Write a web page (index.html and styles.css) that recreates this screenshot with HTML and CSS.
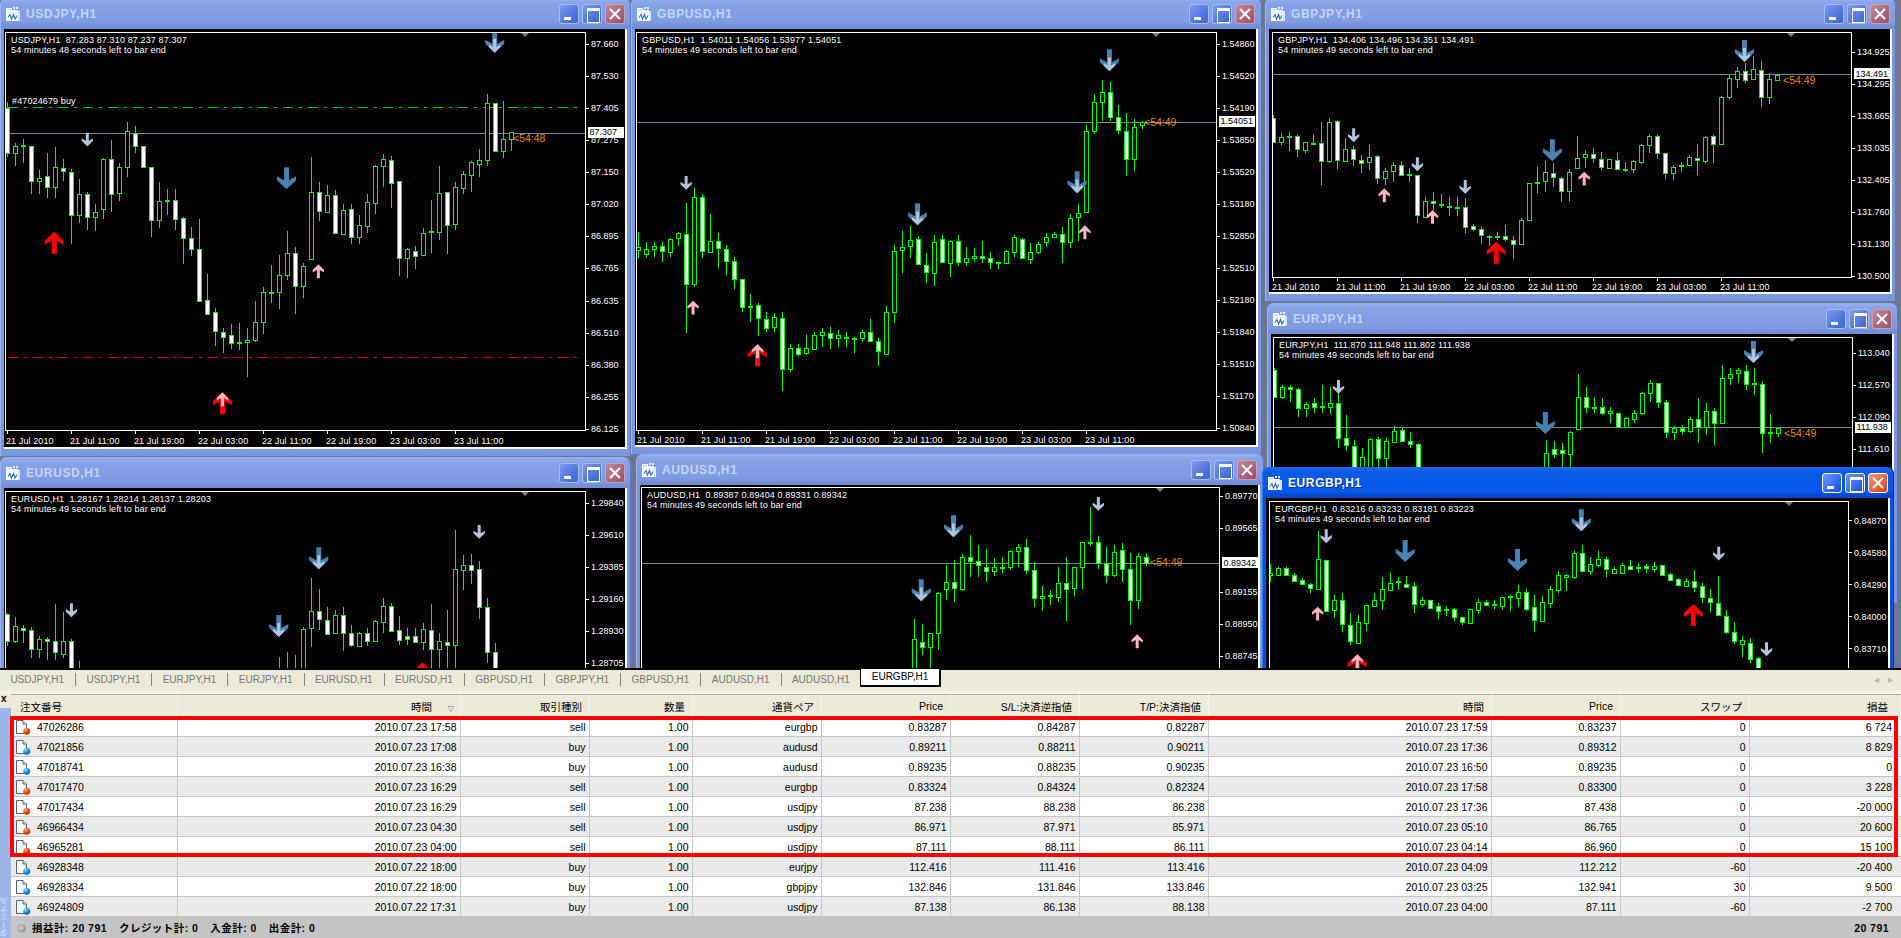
FILE: index.html
```html
<!DOCTYPE html>
<html lang="ja">
<head>
<meta charset="utf-8">
<title>MetaTrader</title>
<link rel="stylesheet" href="styles.css">
</head>
<body>
<svg class="sprite" aria-hidden="true">
  <defs>
    <radialGradient id="ballRed" cx="35%" cy="30%" r="75%"><stop offset="0" stop-color="#ffb08a"/><stop offset=".5" stop-color="#f04a10"/><stop offset="1" stop-color="#b82800"/></radialGradient>
    <radialGradient id="ballBlue" cx="35%" cy="30%" r="75%"><stop offset="0" stop-color="#a8e0ff"/><stop offset=".5" stop-color="#1c8ee8"/><stop offset="1" stop-color="#0a58b0"/></radialGradient>
    <symbol id="docSell" viewBox="0 0 16 16"><path d="M1.5 1.5H8L11.5 5V14.5H1.5Z" fill="#fff" stroke="#56616e"/><path d="M8 1.5V5H11.5" fill="#e4e8ee" stroke="#56616e"/><circle cx="11.7" cy="12.3" r="3.4" fill="url(#ballRed)"/></symbol>
    <symbol id="docBuy" viewBox="0 0 16 16"><path d="M1.5 1.5H8L11.5 5V14.5H1.5Z" fill="#fff" stroke="#56616e"/><path d="M8 1.5V5H11.5" fill="#e4e8ee" stroke="#56616e"/><circle cx="11.7" cy="12.3" r="3.4" fill="url(#ballBlue)"/></symbol>
    <symbol id="winIcon" viewBox="0 0 14 14"><path d="M0 1H6V3H12V14H0Z" fill="#fff"/><path d="M1 2H5V4H1Z" fill="#d6e4fb"/><path d="M7 0H9V2H7ZM10 0H12V2H10Z" fill="#e8f0ff"/><path d="M0 5H14V6H0Z" fill="#e8f0ff"/><path d="M2 10.5L4 7.5 5.5 12 7.5 7.5 9 12 11 8.5" fill="none" stroke="#2f74c8" stroke-width="1.2"/><path d="M12 4H14V14H12Z" fill="#dbe7fd"/></symbol>
  </defs>
</svg>

<main class="app">
  <section class="mdi">
    <article class="win win-usdjpy">
      <header class="bar"><svg class="wicon"><use href="#winIcon"/></svg><span class="wtitle">USDJPY,H1</span><span class="btns"><i class="btn min"></i><i class="btn max"></i><i class="btn cls"></i></span></header>
      <div class="client"><svg class="chart" data-chart="usdjpy"></svg></div>
    </article>
    <article class="win win-gbpusd">
      <header class="bar"><svg class="wicon"><use href="#winIcon"/></svg><span class="wtitle">GBPUSD,H1</span><span class="btns"><i class="btn min"></i><i class="btn max"></i><i class="btn cls"></i></span></header>
      <div class="client"><svg class="chart" data-chart="gbpusd"></svg></div>
    </article>
    <article class="win win-gbpjpy">
      <header class="bar"><svg class="wicon"><use href="#winIcon"/></svg><span class="wtitle">GBPJPY,H1</span><span class="btns"><i class="btn min"></i><i class="btn max"></i><i class="btn cls"></i></span></header>
      <div class="client"><svg class="chart" data-chart="gbpjpy"></svg></div>
    </article>
    <article class="win win-eurjpy">
      <header class="bar"><svg class="wicon"><use href="#winIcon"/></svg><span class="wtitle">EURJPY,H1</span><span class="btns"><i class="btn min"></i><i class="btn max"></i><i class="btn cls"></i></span></header>
      <div class="client"><svg class="chart" data-chart="eurjpy"></svg></div>
    </article>
    <article class="win win-eurusd">
      <header class="bar"><svg class="wicon"><use href="#winIcon"/></svg><span class="wtitle">EURUSD,H1</span><span class="btns"><i class="btn min"></i><i class="btn max"></i><i class="btn cls"></i></span></header>
      <div class="client"><svg class="chart" data-chart="eurusd"></svg></div>
    </article>
    <article class="win win-audusd">
      <header class="bar"><svg class="wicon"><use href="#winIcon"/></svg><span class="wtitle">AUDUSD,H1</span><span class="btns"><i class="btn min"></i><i class="btn max"></i><i class="btn cls"></i></span></header>
      <div class="client"><svg class="chart" data-chart="audusd"></svg></div>
    </article>
    <article class="win win-eurgbp active">
      <header class="bar"><svg class="wicon"><use href="#winIcon"/></svg><span class="wtitle">EURGBP,H1</span><span class="btns"><i class="btn min"></i><i class="btn max"></i><i class="btn cls"></i></span></header>
      <div class="client"><svg class="chart" data-chart="eurgbp"></svg></div>
    </article>
  </section>

  <nav class="tabs">
    <span class="tab">USDJPY,H1</span><span class="tab">USDJPY,H1</span><span class="tab">EURJPY,H1</span><span class="tab">EURJPY,H1</span><span class="tab">EURUSD,H1</span><span class="tab">EURUSD,H1</span><span class="tab">GBPUSD,H1</span><span class="tab">GBPJPY,H1</span><span class="tab">GBPUSD,H1</span><span class="tab">AUDUSD,H1</span><span class="tab last">AUDUSD,H1</span><span class="tab current">EURGBP,H1</span>
    <span class="scroll"><span>◂</span><span>▸</span></span>
  </nav>

  <section class="term">
    <aside class="side"><b class="closex">x</b><div class="strip"><span class="striptext">ターミナル</span></div></aside>
    <div class="list">
      <table class="orders">
        <colgroup><col class="c1"><col class="c2"><col class="c3"><col class="c4"><col class="c3"><col class="c3"><col class="c3"><col class="c3"><col class="c2"><col class="c3"><col class="c3"><col></colgroup>
        <thead>
          <tr><th class="left">注文番号</th><th>時間<span class="sort">▽</span></th><th>取引種別</th><th>数量</th><th>通貨ペア</th><th>Price</th><th>S/L:決済逆指値</th><th>T/P:決済指値</th><th>時間</th><th>Price</th><th>スワップ</th><th>損益</th></tr>
        </thead>
        <tbody>
          <tr><td class="left"><span class="id"><svg class="doc"><use href="#docSell"/></svg>47026286</span></td><td>2010.07.23 17:58</td><td>sell</td><td>1.00</td><td>eurgbp</td><td>0.83287</td><td>0.84287</td><td>0.82287</td><td>2010.07.23 17:59</td><td>0.83237</td><td>0</td><td>6 724</td></tr>
          <tr><td class="left"><span class="id"><svg class="doc"><use href="#docBuy"/></svg>47021856</span></td><td>2010.07.23 17:08</td><td>buy</td><td>1.00</td><td>audusd</td><td>0.89211</td><td>0.88211</td><td>0.90211</td><td>2010.07.23 17:36</td><td>0.89312</td><td>0</td><td>8 829</td></tr>
          <tr><td class="left"><span class="id"><svg class="doc"><use href="#docBuy"/></svg>47018741</span></td><td>2010.07.23 16:38</td><td>buy</td><td>1.00</td><td>audusd</td><td>0.89235</td><td>0.88235</td><td>0.90235</td><td>2010.07.23 16:50</td><td>0.89235</td><td>0</td><td>0</td></tr>
          <tr><td class="left"><span class="id"><svg class="doc"><use href="#docSell"/></svg>47017470</span></td><td>2010.07.23 16:29</td><td>sell</td><td>1.00</td><td>eurgbp</td><td>0.83324</td><td>0.84324</td><td>0.82324</td><td>2010.07.23 17:58</td><td>0.83300</td><td>0</td><td>3 228</td></tr>
          <tr><td class="left"><span class="id"><svg class="doc"><use href="#docSell"/></svg>47017434</span></td><td>2010.07.23 16:29</td><td>sell</td><td>1.00</td><td>usdjpy</td><td>87.238</td><td>88.238</td><td>86.238</td><td>2010.07.23 17:36</td><td>87.438</td><td>0</td><td>-20 000</td></tr>
          <tr><td class="left"><span class="id"><svg class="doc"><use href="#docSell"/></svg>46966434</span></td><td>2010.07.23 04:30</td><td>sell</td><td>1.00</td><td>usdjpy</td><td>86.971</td><td>87.971</td><td>85.971</td><td>2010.07.23 05:10</td><td>86.765</td><td>0</td><td>20 600</td></tr>
          <tr><td class="left"><span class="id"><svg class="doc"><use href="#docSell"/></svg>46965281</span></td><td>2010.07.23 04:00</td><td>sell</td><td>1.00</td><td>usdjpy</td><td>87.111</td><td>88.111</td><td>86.111</td><td>2010.07.23 04:14</td><td>86.960</td><td>0</td><td>15 100</td></tr>
          <tr><td class="left"><span class="id"><svg class="doc"><use href="#docBuy"/></svg>46928348</span></td><td>2010.07.22 18:00</td><td>buy</td><td>1.00</td><td>eurjpy</td><td>112.416</td><td>111.416</td><td>113.416</td><td>2010.07.23 04:09</td><td>112.212</td><td>-60</td><td>-20 400</td></tr>
          <tr><td class="left"><span class="id"><svg class="doc"><use href="#docBuy"/></svg>46928334</span></td><td>2010.07.22 18:00</td><td>buy</td><td>1.00</td><td>gbpjpy</td><td>132.846</td><td>131.846</td><td>133.846</td><td>2010.07.23 03:25</td><td>132.941</td><td>30</td><td>9 500</td></tr>
          <tr><td class="left"><span class="id"><svg class="doc"><use href="#docBuy"/></svg>46924809</span></td><td>2010.07.22 17:31</td><td>buy</td><td>1.00</td><td>usdjpy</td><td>87.138</td><td>86.138</td><td>88.138</td><td>2010.07.23 04:00</td><td>87.111</td><td>-60</td><td>-2 700</td></tr>
        </tbody>
      </table>
      <div class="redbox"></div>
      <footer class="totals"><i class="dot"></i><span>損益計: 20 791</span><span>クレジット計: 0</span><span>入金計: 0</span><span>出金計: 0</span><b class="total">20 791</b></footer>
    </div>
  </section>
</main>
<script src="chart.js"></script>
</body>
</html>
```
FILE: styles.css
```css
* { box-sizing: border-box; }
html, body { margin: 0; height: 100%; overflow: hidden; }
body { background: #808890; font-family: "Liberation Sans", "Noto Sans CJK JP", sans-serif; font-size: 10.5px; color: #000; }
.sprite { position: absolute; width: 0; height: 0; }
.app { display: flex; flex-direction: column; height: 938px; }

/* MDI desktop: the windows sit on a free canvas */
.mdi { position: relative; height: 668px; overflow: hidden; flex: none; background: #6d7690; }
.win { position: absolute; display: flex; flex-direction: column; padding: 0 4px 7px; border-radius: 7px 7px 0 0;
  background: linear-gradient(#9ab2ee 0, #86a2e8 5px, #7e9ae3 24px, #6f8bd2 30px, #7b97df 31px, #7b97df 100%); box-shadow: inset 1px 0 #9db4ee, inset -1px 0 #5f78bd; }
.win-usdjpy { left: 0; top: -2px; width: 631px; height: 458px; }
.win-gbpusd { left: 631px; top: -2px; width: 631px; height: 456px; }
.win-gbpjpy { left: 1265px; top: -2px; width: 631px; height: 303px; }
.win-eurjpy { left: 1267px; top: 303px; width: 631px; height: 300px; }
.win-eurusd { left: 0; top: 457px; width: 631px; height: 300px; }
.win-audusd { left: 636px; top: 454px; width: 628px; height: 300px; }
.win-eurgbp { left: 1262px; top: 467px; width: 632px; height: 300px; }
.win-eurgbp.active { background: linear-gradient(#1c6cf0 0, #0a5ae6 5px, #0658ea 24px, #0344c4 30px, #0a50e0 31px, #0a50e0 100%); box-shadow: inset 1px 0 #2d78f0, inset -1px 0 #0331b0; }

.bar { display: flex; align-items: flex-start; height: 31px; flex: none; padding: 6px 2px 0; }
.win-gbpusd .bar, .win-audusd .bar { padding-right: 3px; }
.wicon { width: 14px; height: 14px; flex: none; margin-top: 3px; }
.wtitle { margin: 3px 0 0 6px; font-weight: bold; font-size: 12px; line-height: 14px; letter-spacing: .6px; color: #c8d5f5; }
.active .wtitle { color: #fff; text-shadow: 1px 1px 0 #02309a; }
.btns { display: flex; gap: 3px; margin-left: auto; }
.btn { position: relative; display: block; width: 20px; height: 20px; border-radius: 3px; border: 1px solid #a9bdf0; background: linear-gradient(135deg, #7b9af0, #4a72dc 70%, #3f66d0); }
.btn.cls { border-color: #c9a0b4; background: linear-gradient(135deg, #c08a9c, #a85f72 70%, #9a5068); }
.active .btn { border-color: #fff; background: linear-gradient(135deg, #6e9bff, #2f63e4 70%, #1e50d0); }
.active .btn.cls { background: linear-gradient(135deg, #f09a78, #de5a2c 70%, #c8421c); }
.btn.min::after { content: ""; position: absolute; left: 4px; bottom: 3px; width: 7px; height: 3px; background: #fff; }
.btn.max::after { content: ""; position: absolute; left: 4px; top: 3px; width: 11px; height: 11px; border: 1px solid #fff; border-top-width: 3px; }
.btn.cls::before, .btn.cls::after { content: ""; position: absolute; left: 2px; top: 8px; width: 14px; height: 2px; background: #fff; transform: rotate(45deg); }
.btn.cls::after { transform: rotate(-45deg); }

.client { flex: 1; min-height: 0; background: #000; border-right: 2px solid #fff; border-bottom: 2px solid #fff; }
.chart { display: block; width: 100%; height: 100%; }
.chart text { font-family: "Liberation Sans", sans-serif; font-size: 9px; fill: #fff; white-space: pre; }
.chart text.legend { letter-spacing: .13px; }
.chart text.tl { letter-spacing: .1px; }
.chart text.timer { font-size: 10.5px; fill: #e88a14; }
.chart text.now { fill: #000; }
.chart .crisp { shape-rendering: crispEdges; }

/* tab strip */
.tabs { display: flex; align-items: flex-start; flex: none; height: 26px; border-top: 2px solid #000; color: #777; font-size: 10px;
  background: repeating-conic-gradient(#e9e6d5 0 25%, #f0eddd 0 50%) 0 0/2px 2px; box-shadow: inset 0 -3px #f4f2e6, inset 0 -2px #fff; }
.tab { height: 13px; line-height: 13px; margin-top: 3px; padding: 0 11px 0 10.4px; border-right: 1px solid #8a8880; white-space: nowrap; }
.tab.last { border-right: 0; }
.tab.current { height: 18px; line-height: 16px; margin: -1px 0 0 -1px; padding: 0 11px; color: #000; background: #fff; border: 1px solid #000; border-width: 0 2px 2px 1px; }
.scroll { display: flex; gap: 9px; margin: 3px 8px 0 auto; color: #b8b6aa; font-size: 10px; line-height: 13px; }

/* terminal */
.term { display: flex; flex: 1; min-height: 0; }
.side { width: 11px; flex: none; display: flex; flex-direction: column; background: #ece9d8; }
.closex { height: 14px; font-size: 10px; line-height: 10px; padding-left: 1px; }
.strip { flex: 1; overflow: hidden; display: flex; align-items: flex-end; background: #9db6e8; }
.striptext { writing-mode: vertical-rl; transform: rotate(180deg); color: #dfe8fb; font-size: 8px; line-height: 10px; margin-bottom: 1px; }
.list { position: relative; flex: 1; min-width: 0; background: #fff; }
.orders { border-collapse: separate; border-spacing: 0; table-layout: fixed; width: 100%; }
.c1 { width: 167px; } .c2 { width: 283px; } .c3 { width: 129px; } .c4 { width: 103px; }
.orders th { height: 23px; padding: 0 7px 0 4px; text-align: right; font-weight: normal; font-size: 10.5px; border-top: 1px solid #aca899; border-right: 1px solid #f6f5ee;
  background: repeating-conic-gradient(#e9e6d5 0 25%, #f0eddd 0 50%) 0 0/2px 2px; white-space: nowrap; }
.orders th.left { text-align: left; padding-left: 9px; }
.orders th:last-child { padding-right: 12px; }
.sort { display: inline-block; width: 9px; margin: 0 -1px 0 13px; color: #777; font-size: 8px; font-family: "DejaVu Sans", sans-serif; }
.orders td { height: 20px; padding: 0 3.5px 0 4px; text-align: right; border-right: 1px solid #c8c8c8; border-bottom: 1px solid #c4c4c4; white-space: nowrap; background: #fff; }
.orders td:last-child { padding-right: 9px; border-right: 0; }
.orders tbody tr:nth-child(even) td { background: repeating-conic-gradient(#e6e7e7 0 25%, #ecedec 0 50%) 0 0/2px 2px; }
.orders td.left { text-align: left; }
.id { display: flex; align-items: center; }
.doc { width: 16px; height: 16px; flex: none; margin-right: 6px; }
.redbox { position: absolute; left: -1px; top: 22px; width: 1888px; height: 141px; border: 4px solid #f00; pointer-events: none; }
.totals { display: flex; align-items: center; height: 21px; background: #c4c4c4; font-weight: bold; font-size: 10.5px; letter-spacing: .45px; }
.totals span { margin-right: 12px; }
.dot { width: 9px; height: 9px; margin: 2px 6px 0 6px; border-radius: 50%; background: radial-gradient(circle at 40% 40%, #c4c4c4 0 30%, #8e8e8e 70%); border: 1px solid #a8a8a8; }
.total { margin-left: auto; margin-right: 12px; }
```
FILE: chart.js
```js
// Candle data per chart, read in "zoom units": x = x0 + 8*i, page y = yoff + v/3.
// Each candle: [high, bodyTop, bodyBottom, low, white(1)/hollow(0)]
var CHARTS = {
  usdjpy: { x0:7, yoff:0, xoff:0, fx:2.45, plot:[5,32,586,431], head:"USDJPY,H1  87.283 87.310 87.237 87.307", sub:"54 minutes 48 seconds left to bar end", bid:398, now:"87.307", nowY:395, timer:"<54:48", timerX:513, timerY:416, tri:525, axisTime:441,
    prices:[[131,"87.660"],[227,"87.530"],[323,"87.405"],[419,"87.275"],[515,"87.150"],[611,"87.020"],[707,"86.895"],[803,"86.765"],[902,"86.635"],[998,"86.510"],[1094,"86.380"],[1190,"86.255"],[1286,"86.125"]],
    orders:[[320,"#00d000"],[1072,"#e00000"]], note:["#47024679 buy",12,100],
    arrows:[["b",214,398],["B",702,502],["G",1212,92],["R",133,695],["H",545,1177],["r",780,793]],
    segs:[[0,[[305,325,460,470,1],[430,437,460,497,0],[418,436,437,488,0],[437,439,543,581,1],[510,533,544,581,0],[460,529,562,593,1],[442,502,562,593,0],[477,503,514,543,1],[508,515,646,732,1],[537,583,646,668,0],[575,583,652,690,1],[612,635,652,693,0],[475,478,628,657,0],[420,478,583,636,1],[490,502,580,603,0],[366,394,502,530,0],[378,398,439,458,1],[438,439,502,502,1],[502,502,661,711,1],[547,604,661,684,0],[568,601,604,645,0],[568,601,658,690,1],[652,655,715,792,1],[680,715,748,768,1],[657,748,902,902,1],[822,899,943,945,1],[925,937,994,1038,1],[985,995,1010,1058,1],[972,1006,1030,1047,1],[968,1027,1029,1050,0],[984,1019,1025,1130,0],[903,967,1019,1025,0],[862,877,965,1002,0],[795,875,877,908,0],[765,826,875,927,0],[693,760,825,840,0],[742,760,857,942,1],[790,798,857,893,0],[472,577,776,776,0],[545,577,632,663,1],[555,586,635,640,0],[570,586,700,700,1],[612,631,702,706,0],[612,628,712,732,1],[645,676,712,732,0],[582,607,677,698,0],[496,499,610,642,0],[462,478,499,561,0],[468,481,548,623,1],[542,544,775,828,1],[745,747,773,833,0],[738,752,767,807,1],[685,700,764,764,0],[600,693,696,758,0],[498,580,695,720,0],[575,577,674,762,1],[545,562,671,690,0],[514,523,563,581,0],[483,487,524,575,0],[448,479,491,530,0],[283,310,479,497,0],[310,310,452,452,1],[303,418,452,473,0],[395,397,417,453,0]]]] },
  gbpusd: { x0:638, yoff:0, xoff:640, fx:2.45, plot:[636,32,1217,431], head:"GBPUSD,H1  1.54011 1.54056 1.53977 1.54051", sub:"54 minutes 49 seconds left to bar end", bid:365, now:"1.54051", nowY:362, timer:"<54:49", timerX:1144, timerY:367, tri:1156, axisTime:440,
    prices:[[131,"1.54860"],[227,"1.54520"],[323,"1.54190"],[419,"1.53850"],[515,"1.53520"],[611,"1.53180"],[707,"1.52850"],[803,"1.52510"],[899,"1.52180"],[995,"1.51840"],[1091,"1.51510"],[1187,"1.51170"],[1283,"1.50840"]],
    arrows:[["b",113,528],["G",680,610],["G",1071,514],["G",1150,148],["r",130,902],["r",1090,676],["H",288,1033]],
    segs:[[0,[[697,740,750,775,0],[725,748,762,775,0],[725,737,748,770,0],[725,737,753,785,1],[715,716,755,770,0],[695,700,715,738,0],[610,701,853,1000,1],[565,590,853,862,0],[582,590,754,773,1],[642,724,755,760,0],[700,724,745,804,1],[735,746,784,825,1],[770,784,838,866,1],[837,838,920,935,1],[882,918,920,965,0],[910,916,955,1007,1],[935,958,983,995,1],[940,952,980,995,0],[937,953,1108,1172,1],[1032,1045,1108,1115,0],[1033,1045,1063,1068,1],[1005,1045,1060,1065,0],[995,1005,1047,1050,0],[985,997,1006,1040,0],[982,998,1015,1046,1],[990,1006,1013,1040,0],[997,1010,1015,1040,1],[1012,1014,1016,1058,0],[990,995,1013,1025,0],[957,995,1022,1025,1],[1015,1022,1054,1098,1],[918,937,1063,1063,0],[735,752,935,968,0],[692,740,751,818,0],[678,719,737,773,0],[708,718,793,795,1],[758,794,817,850,1],[705,725,818,857,0],[706,716,785,790,1],[721,722,788,830,0],[705,722,787,797,1],[740,773,785,797,0],[745,768,773,785,0],[724,768,775,790,1],[755,773,787,806,1],[785,787,790,806,0],[750,754,790,792,0],[705,712,755,772,0],[715,716,775,778,1],[730,755,776,791,0],[725,731,755,763,0],[698,712,727,741,0],[697,702,712,714,0],[680,702,727,788,1],[643,653,727,743,0],[612,638,650,722,0],[376,394,637,637,0],[282,307,393,403,0],[240,275,307,364,0],[246,275,350,364,1],[315,350,391,402,1],[340,392,478,527,1],[358,382,478,514,0],[363,365,376,387,0]]]] },
  gbpjpy: { x0:1273, yoff:0, xoff:1260, fx:2.446, plot:[1272,32,1852,278], head:"GBPJPY,H1  134.406 134.496 134.351 134.491", sub:"54 minutes 49 seconds left to bar end", bid:223, now:"134.491", nowY:220, timer:"<54:49", timerX:1783, timerY:241, tri:1791, axisTime:287,
    prices:[[155,"134.925"],[251,"134.295"],[347,"133.665"],[443,"133.035"],[539,"132.405"],[635,"131.760"],[731,"131.130"],[827,"130.500"]],
    arrows:[["b",229,385],["b",385,472],["b",502,540],["B",715,418],["G",1185,120],["r",304,565],["r",422,630],["r",793,515],["R",578,725]],
    segs:[[0,[[345,355,425,425,1],[400,412,425,435,0],[395,408,412,452,0],[405,408,448,470,1],[425,427,450,458,0],[402,428,432,435,0],[366,430,482,555,1],[354,365,482,488,0],[360,364,480,507,1],[415,448,482,485,0],[438,448,478,498,1],[465,479,490,520,1],[435,470,487,510,0],[465,467,535,553,1],[505,512,535,555,0],[487,496,512,545,0],[482,496,525,527,1],[505,522,526,545,0],[525,526,645,668,1],[590,602,650,655,0],[577,602,610,630,1],[583,611,615,625,1],[590,618,620,648,0],[590,620,622,648,0],[595,622,680,698,1],[672,677,688,692,1],[680,686,705,733,1],[706,707,709,738,0],[695,707,709,720,0],[675,707,718,723,1],[708,720,733,778,1],[655,660,733,735,0],[548,549,661,662,0],[500,545,550,578,0],[483,517,544,575,0],[490,518,532,560,1],[530,533,573,607,1],[508,515,573,603,0],[408,473,503,503,0],[450,461,472,503,0],[445,461,475,490,1],[455,477,502,510,1],[478,478,505,507,0],[460,479,508,510,1],[485,506,509,517,0],[480,484,508,518,0],[432,436,485,492,0],[403,407,435,460,0],[405,407,460,477,1],[458,460,520,538,1],[495,502,520,540,0],[487,496,499,515,0],[465,472,496,498,0],[432,473,481,525,1],[407,412,482,490,0],[405,409,433,490,1],[288,290,433,435,0],[225,235,290,297,0],[200,212,238,265,0],[190,212,240,248,1],[168,208,238,240,0],[183,209,291,320,1],[220,238,292,312,0],[222,225,240,243,0]]]] },
  eurjpy: { x0:1274, yoff:0, xoff:1260, fx:2.446, plot:[1273,337,1853,700], head:"EURJPY,H1  111.870 111.948 111.802 111.938", sub:"54 minutes 49 seconds left to bar end", bid:1282, now:"111.938", nowY:1280, timer:"<54:49", timerX:1784, timerY:1300, tri:1792,
    prices:[[1058,"113.040"],[1154,"112.570"],[1250,"112.090"],[1346,"111.610"]],
    arrows:[["b",192,1140],["B",698,1236],["G",1207,1023]],
    segs:[[0,[[1105,1110,1190,1192,1],[1155,1162,1190,1198,0],[1155,1161,1167,1205,1],[1165,1168,1225,1252,1],[1205,1213,1225,1250,0],[1195,1210,1222,1240,1],[1155,1219,1221,1240,0],[1160,1210,1220,1242,0],[1180,1210,1315,1345,1],[1245,1315,1336,1352,1],[1320,1338,1420,1420,1],[1345,1372,1420,1420,0],[1315,1318,1420,1420,0],[1312,1318,1375,1420,1],[1315,1323,1375,1420,0],[1278,1292,1325,1330,0],[1285,1290,1322,1327,1],[1295,1322,1332,1345,1],[1330,1333,1420,1420,1]]],
      [34,[[1320,1360,1420,1420,0],[1322,1348,1362,1375,1],[1328,1350,1360,1420,1],[1292,1296,1362,1420,0],[1122,1192,1288,1290,0],[1160,1192,1222,1240,1],[1190,1222,1224,1240,0],[1195,1222,1240,1245,1],[1220,1234,1240,1270,0],[1238,1238,1280,1282,1],[1250,1255,1280,1282,0],[1230,1238,1258,1270,0],[1175,1178,1240,1245,0],[1140,1150,1178,1205,0],[1148,1150,1207,1225,1],[1200,1207,1296,1315,1],[1278,1285,1295,1320,0],[1275,1285,1294,1305,1],[1250,1258,1294,1300,0],[1195,1258,1280,1330,1],[1210,1232,1280,1305,0],[1225,1232,1270,1335,1],[1095,1135,1270,1272,0],[1105,1122,1135,1155,0],[1105,1110,1118,1148,0],[1095,1112,1152,1170,1],[1105,1150,1152,1185,0],[1142,1151,1300,1358,1],[1242,1297,1300,1330,0],[1285,1285,1298,1312,0]]]] },
  eurusd: { x0:7, yoff:450, xoff:0, fx:2.45, plot:[5,491,586,700], head:"EURUSD,H1  1.28167 1.28214 1.28137 1.28203", sub:"54 minutes 49 seconds left to bar end", tri:525,
    prices:[[158,"1.29840"],[254,"1.29610"],[350,"1.29385"],[446,"1.29160"],[542,"1.28930"],[638,"1.28705"]],
    arrows:[["b",175,460],["b",1174,225],["G",683,495],["G",781,292],["R",1035,637]],
    segs:[[0,[[490,493,572,587,1],[500,529,572,580,0],[525,533,539,578,1],[530,541,596,625,1],[558,568,596,623,0],[562,568,574,630,1],[462,574,607,630,1],[487,574,611,623,0],[568,574,690,700,1],[633,690,700,700,0]]],
      [34,[[622,690,700,700,0],[605,690,700,700,0],[615,690,700,700,0],[530,537,700,700,0],[385,484,533,590,0],[418,484,508,540,1],[470,511,551,555,1],[480,496,548,550,0],[472,496,548,603,1],[525,548,584,590,1],[545,550,587,587,0],[535,550,572,588,1],[510,514,572,575,0],[445,468,515,550,0],[460,469,543,545,1],[498,541,569,585,1],[535,558,567,585,1],[535,559,575,580,1],[520,538,576,600,0],[462,541,598,700,1],[550,574,596,700,0],[480,575,584,700,1],[240,358,584,700,0],[315,346,359,420,0],[312,346,359,402,1],[333,358,472,507,1],[445,472,605,640,1],[580,607,700,700,1]]]] },
  audusd: { x0:642, yoff:450, xoff:640, fx:2.45, plot:[641,487,1220,700], head:"AUDUSD,H1  0.89387 0.89404 0.89331 0.89342", sub:"54 minutes 49 seconds left to bar end", bid:340, now:"0.89342", nowY:337, timer:"<54:49", timerX:1150, timerY:337, tri:1160,
    prices:[[137,"0.89770"],[233,"0.89565"],[425,"0.89155"],[521,"0.88950"],[617,"0.88745"]],
    arrows:[["G",768,196],["G",689,388],["b",1123,141],["r",1218,553]],
    segs:[[34,[[508,568,700,700,0],[522,575,592,615,1],[550,550,590,700,0],[427,428,550,600,0],[345,395,418,450,0],[330,395,415,455,1],[312,322,418,422,0],[255,320,332,380,1],[285,332,345,380,1],[297,350,364,395,1],[325,350,364,378,0],[320,351,354,370,0],[300,302,352,360,0],[283,292,302,350,0],[267,292,361,372,1],[335,361,445,470,1],[408,437,445,483,0],[420,436,439,465,0],[352,400,440,455,0],[322,400,417,512,1],[350,352,415,437,0],[275,277,352,417,0],[172,276,278,288,0],[258,275,338,358,1],[290,340,375,398,1],[285,305,376,380,0],[280,301,358,395,1],[310,356,451,525,1],[308,318,451,477,0],[310,320,340,347,1]]]] },
  eurgbp: { x0:1270, yoff:460, xoff:1260, fx:2.446, plot:[1269,501,1849,700], head:"EURGBP,H1  0.83216 0.83232 0.83181 0.83223", sub:"54 minutes 49 seconds left to bar end", tri:1789,
    prices:[[181,"0.84870"],[277,"0.84580"],[373,"0.84290"],[469,"0.84000"],[565,"0.83710"]],
    arrows:[["b",162,208],["B",355,240],["B",630,267],["G",786,148],["b",1122,260],["b",1239,547],["r",141,440],["H",238,583],["R",1060,432]],
    segs:[[0,[[312,340,346,365,0],[322,325,344,345,0],[322,325,344,345,1],[340,346,362,365,1],[355,361,371,375,1],[368,371,383,398,1],[212,298,386,388,0],[300,300,452,455,1],[405,421,451,475,0],[400,421,493,515,1],[460,494,543,555,1],[465,487,548,550,0],[435,436,488,512,0],[400,421,437,440,0],[350,388,421,450,0],[340,370,389,392,0],[352,363,367,390,0],[348,371,381,382,1],[365,378,433,458,1],[412,421,431,440,0],[420,421,443,445,1],[430,438,454,477,1],[438,448,451,467,0],[443,448,470,482,1],[470,470,487,495,1],[448,448,488,490,0],[418,427,449,462,0],[420,427,434,436,1],[420,432,436,447,0],[410,412,437,450,0],[405,408,410,452,0],[375,397,413,442,0],[388,397,446,452,1],[405,442,480,515,1],[408,427,482,485,0],[378,388,428,445,0],[332,346,389,398,0],[342,345,350,392,0],[273,280,350,358,0],[255,280,332,335,1],[292,312,332,345,0],[272,298,314,322,0],[292,298,328,350,1],[322,328,338,340,0],[310,316,338,342,0],[300,318,326,330,1],[310,322,325,338,0],[312,318,325,338,1],[307,318,326,335,0],[315,316,344,347,1],[340,343,359,360,1],[355,358,374,378,1],[355,364,377,380,0],[330,364,380,395,1],[370,377,412,428,1],[388,413,427,455,1],[348,430,466,468,1],[450,467,515,522,1],[487,515,542,552,1],[528,540,551,590,0],[535,550,596,608,1],[590,595,640,640,1]]]] }
};
var TIMES = ["21 Jul 2010","21 Jul 11:00","21 Jul 19:00","22 Jul 03:00","22 Jul 11:00","22 Jul 19:00","23 Jul 03:00","23 Jul 11:00"];
var ARROW = "M-2.5 0H2.5V13L9.5 9V13L0 22L-9.5 13V9L-2.5 13Z";
var COL = { B:"#4682b4", b:"#b0c4de", R:"#ff0000", r:"#ffb6c1" };

function arrowPath(kind, x, y) {
  var up = kind === "R" || kind === "r";
  var small = kind === "b" || kind === "r";
  var sx = small ? 0.6 : 1, sy = small ? 0.63 : 1, h = 22 * sy;
  var tf = up ? "translate(" + x + " " + (y + h) + ") scale(" + sx + " " + (-sy) + ")"
              : "translate(" + x + " " + y + ") scale(" + sx + " " + sy + ")";
  return '<path d="' + ARROW + '" fill="' + COL[kind] + '" transform="' + tf + '"/>';
}

function drawArrow(a, c) {
  var x = c.xoff + a[1] / c.fx, y = c.yoff + a[2] / 3;
  if (a[0] === "G") return arrowPath("B", x, y) + arrowPath("b", x, y + 8.1);
  if (a[0] === "H") return arrowPath("R", x, y) + arrowPath("r", x, y);
  return arrowPath(a[0], x, y);
}

function candle(d, x, c) {
  var Y = function (v) { return Math.round(c.yoff + v / 3); };
  var hi = Y(d[0]), top = Y(d[1]), bot = Y(d[2]), lo = Y(d[3]);
  var s = '<path d="M' + (x + .5) + ' ' + hi + 'V' + top + 'M' + (x + .5) + ' ' + bot + 'V' + lo + '" stroke="#0f0"/>';
  var h = bot - top;
  if (h <= 1) return s + '<rect x="' + (x - 2) + '" y="' + top + '" width="5" height="2" fill="#0f0"/>';
  return s + '<rect x="' + (x - 1.5) + '" y="' + (top + .5) + '" width="4" height="' + h + '" fill="' + (d[4] ? "#fff" : "#000") + '" stroke="#0f0"/>';
}

Object.keys(CHARTS).forEach(function (id) {
  var c = CHARTS[id];
  var svg = document.querySelector('[data-chart="' + id + '"]');
  var r = svg.getBoundingClientRect();
  svg.setAttribute("viewBox", r.left + " " + r.top + " " + r.width + " " + r.height);
  var p = c.plot, L = p[0], T = p[1], R = p[2], B = p[3];
  var o = '<clipPath id="clip-' + id + '"><rect x="' + L + '" y="' + T + '" width="' + (R - L) + '" height="' + (B - T) + '"/></clipPath>';
  o += '<g class="crisp" clip-path="url(#clip-' + id + ')">';
  if (c.bid) o += '<rect x="' + L + '" y="' + Math.round(c.yoff + c.bid / 3) + '" width="' + (R - L) + '" height="1" fill="#778899"/>';
  (c.orders || []).forEach(function (l) {
    o += '<path d="M' + (L + 3) + ' ' + (Math.round(l[0] / 3) + .5) + 'H' + (R - 8) + '" stroke="' + l[1] + '" stroke-dasharray="10 6 3 6"/>';
  });
  c.segs.forEach(function (seg) {
    seg[1].forEach(function (d, i) { o += candle(d, c.x0 + 8 * (seg[0] + i), c); });
  });
  o += '</g><g clip-path="url(#clip-' + id + ')">';
  c.arrows.forEach(function (a) { o += drawArrow(a, c); });
  o += '<path d="M' + (c.tri - 5) + ' ' + T + 'H' + (c.tri + 5) + 'L' + c.tri + ' ' + (T + 5) + 'Z" fill="#708090"/>';
  o += '</g>';
  // frame
  o += '<rect class="crisp" x="' + (L + .5) + '" y="' + (T + .5) + '" width="' + (R - L - 1) + '" height="' + (B - T - 1) + '" fill="none" stroke="#fff"/>';
  // price axis
  c.prices.forEach(function (v) {
    var y = c.yoff + v[0] / 3;
    o += '<rect class="crisp" x="' + R + '" y="' + Math.round(y) + '" width="3" height="1" fill="#fff"/>';
    o += '<text x="' + (R + 5) + '" y="' + (y + 3.3) + '">' + v[1] + '</text>';
  });
  // legends
  o += '<text class="legend" x="' + (L + 6) + '" y="' + (T + 11) + '">' + c.head + '</text>';
  o += '<text class="legend" x="' + (L + 6) + '" y="' + (T + 21) + '">' + c.sub + '</text>';
  if (c.note) o += '<text class="legend" x="' + c.note[1] + '" y="' + (c.note[2] + 4) + '">' + c.note[0] + '</text>';
  // live price
  if (c.now) {
    var ny = c.yoff + c.nowY / 3;
    o += '<rect class="crisp" x="' + (R + 2) + '" y="' + Math.round(ny - 5) + '" width="36" height="11" fill="#fff"/>';
    o += '<text class="now" x="' + (R + 3.5) + '" y="' + (ny + 3.5) + '">' + c.now + '</text>';
    o += '<text class="timer" x="' + c.timerX + '" y="' + (c.yoff + c.timerY / 3 + 3.5) + '">' + c.timer.replace("<", "&lt;") + '</text>';
  }
  // time axis
  if (c.axisTime) {
    TIMES.forEach(function (t, i) {
      var x = c.x0 + 64 * i;
      o += '<rect class="crisp" x="' + x + '" y="' + B + '" width="1" height="3" fill="#fff"/>';
      o += '<text class="tl" x="' + (x - 1) + '" y="' + (c.axisTime + 3.3) + '">' + t + '</text>';
    });
  }
  svg.innerHTML = o;
});
```
